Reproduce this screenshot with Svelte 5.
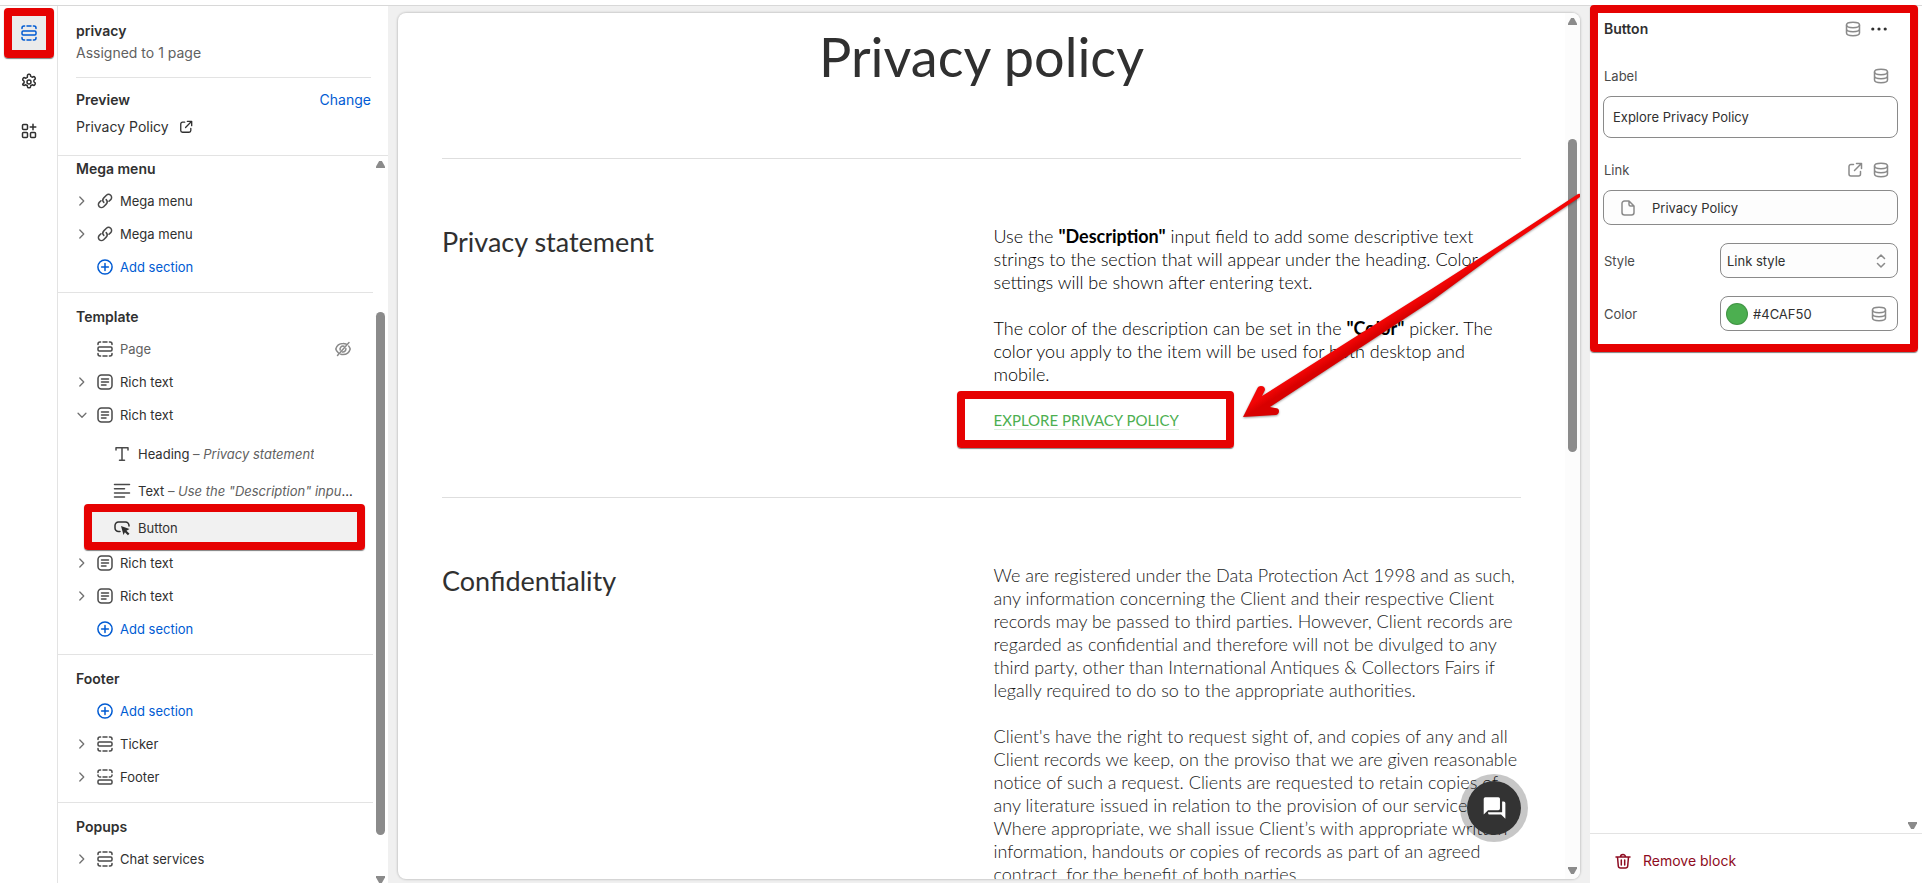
<script lang="ts">
	type Block = { icon: string; label: string; detail?: string; selected?: boolean };
	type Row = { icon: string; label: string; open?: boolean; hidden?: boolean; add?: boolean; blocks?: Block[] };
	type Group = { title: string; rows: Row[] };

	const addRow: Row = { icon: 'plus', label: 'Add section', add: true };

	const groups: Group[] = [
		{
			title: 'Mega menu',
			rows: [{ icon: 'chain', label: 'Mega menu' }, { icon: 'chain', label: 'Mega menu' }, addRow]
		},
		{
			title: 'Template',
			rows: [
				{ icon: 'section', label: 'Page', hidden: true },
				{ icon: 'richtext', label: 'Rich text' },
				{
					icon: 'richtext',
					label: 'Rich text',
					open: true,
					blocks: [
						{ icon: 'heading', label: 'Heading', detail: 'Privacy statement' },
						{ icon: 'text', label: 'Text', detail: 'Use the "Description" input field to add some text' },
						{ icon: 'button', label: 'Button', selected: true }
					]
				},
				{ icon: 'richtext', label: 'Rich text' },
				{ icon: 'richtext', label: 'Rich text' },
				addRow
			]
		},
		{
			title: 'Footer',
			rows: [addRow, { icon: 'section', label: 'Ticker' }, { icon: 'footer', label: 'Footer' }]
		},
		{
			title: 'Popups',
			rows: [{ icon: 'section', label: 'Chat services' }]
		}
	];

	let label = $state('Explore Privacy Policy');
	let style = $state('Link style');
	let color = $state('#4CAF50');
</script>

{#snippet icon(name: string, size = 16)}
	<svg class="icon" width={size} height={size} viewBox="0 0 16 16" aria-hidden="true">
		{#if name === 'section'}
			<rect x="1" y="6" width="14" height="4" rx="1.2" />
			<path d="M1 3.6V3a2 2 0 0 1 2-2h.6M6 1h4M12.4 1h.6a2 2 0 0 1 2 2v.6M1 12.4v.6a2 2 0 0 0 2 2h.6M6 15h4M12.4 15h.6a2 2 0 0 0 2-2v-.6" />
		{:else if name === 'footer'}
			<rect x="1" y="11" width="14" height="4" rx="1.2" />
			<path d="M1 3.6V3a2 2 0 0 1 2-2h.6M6 1h4M12.4 1h.6a2 2 0 0 1 2 2v.6M1 6v.5A1.7 1.7 0 0 0 2.7 8h1M6 8h4M12.3 8h1A1.7 1.7 0 0 0 15 6.500V6" />
		{:else if name === 'gear'}
			<circle cx="8" cy="8" r="2" />
			<path d="M6.500 1.100c.1-.5.5-.9 1-.9h1c.5 0 .9.4 1 .9l.2 1.300c.5.200 1 .5 1.400.8l1.300-.5c.5-.2 1 0 1.300.5l.5.800c.2.400.1 1-.3 1.300l-1 .9v1.600l1 .9c.4.300.5.900.3 1.300l-.5.800c-.3.500-.8.700-1.300.5l-1.300-.5c-.4.300-.9.600-1.400.8l-.2 1.300c-.1.500-.5.900-1 .9h-1c-.5 0-.9-.4-1-.9l-.2-1.300c-.5-.2-1-.5-1.400-.8l-1.300.5c-.5.2-1 0-1.300-.5L1.800 10.900c-.2-.4-.1-1 .3-1.300l1-.8V7.200l-1-.9c-.4-.3-.5-.9-.3-1.300l.5-.8c.3-.5.800-.7 1.300-.5l1.300.5c.4-.3.900-.6 1.400-.8z" />
		{:else if name === 'apps'}
			<rect x="1.500" y="1.500" width="5" height="5" rx="1" />
			<rect x="1.500" y="9.500" width="5" height="5" rx="1" />
			<rect x="9.500" y="9.500" width="5" height="5" rx="1" />
			<path d="M12 1.200v5.600M9.200 4h5.600" />
		{:else if name === 'external'}
			<path d="M6.500 2.500H4a2 2 0 0 0-2 2V12a2 2 0 0 0 2 2h7.500a2 2 0 0 0 2-2V9.500M9.500 1.500h5v5M14.200 1.800 7.500 8.500" />
		{:else if name === 'chain'}
			<path d="M6.800 9.400a3.200 3.200 0 0 1 0-4.500l2.600-2.600a3 3 0 0 1 4.300 4.300L12 8.300M9.200 6.600a3.200 3.200 0 0 1 0 4.500l-2.600 2.600a3 3 0 0 1-4.300-4.300L4 7.700" />
		{:else if name === 'plus'}
			<circle cx="8" cy="8" r="7.100" />
			<path d="M8 4.600v6.800M4.600 8h6.800" />
		{:else if name === 'richtext'}
			<rect x="1" y="1" width="14" height="14" rx="3.500" />
			<path d="M4.500 5h7M4.500 8h7M4.500 11h4.500" />
		{:else if name === 'heading'}
			<path d="M2 4V1.800h12V4M8 1.800v12.400M5.500 14.200h5" />
		{:else if name === 'text'}
			<path d="M.5 1.500h15M.5 5.700h10M.5 9.900h15M.5 14h10" />
		{:else if name === 'button'}
			<path d="M6 11.500H4.500A3.500 3.500 0 0 1 1 8V5.500A3.500 3.500 0 0 1 4.500 2h7A3.500 3.500 0 0 1 15 5.500V6" />
			<path class="solid" d="m7 6 8.500 3-3 1.700 3 3-1.600 1.600-3-3L9.500 15z" />
		{:else if name === 'hidden'}
			<path d="M11 3A8 8 0 0 0 8 2.500C4 2.500 1.600 5 .8 8c.4 1.500 1.200 2.700 2.400 3.700M5.800 13.200c.7.200 1.400.3 2.200.3 4 0 6.400-2.500 7.200-5.500-.3-1.100-.8-2-1.500-2.900M14 1.500 2.500 14.500" />
			<path d="M9 5.200a3 3 0 0 0-3.800 3.900M10.900 7.500a3 3 0 0 1-3.600 3.400" />
		{:else if name === 'data'}
			<ellipse cx="8" cy="4" rx="6.500" ry="2.700" />
			<path d="M1.500 4v8c0 1.500 2.900 2.700 6.500 2.700s6.500-1.200 6.500-2.700V4M1.500 8c0 1.500 2.900 2.700 6.500 2.700s6.500-1.200 6.500-2.700" />
		{:else if name === 'page'}
			<path d="M9 1H4.500a2.500 2.500 0 0 0-2.500 2.500v9A2.500 2.500 0 0 0 4.500 15h7a2.500 2.500 0 0 0 2.500-2.500V6zM9 1v3.500A1.500 1.500 0 0 0 10.500 6H14" />
		{:else if name === 'dots'}
			<circle class="dot" cx="1.800" cy="8" r="1.600" />
			<circle class="dot" cx="8" cy="8" r="1.600" />
			<circle class="dot" cx="14.200" cy="8" r="1.600" />
		{:else if name === 'trash'}
			<path d="M1 4h14M5.500 4a2.500 2.500 0 0 1 5 0M2.500 4l.8 9a2.200 2.200 0 0 0 2.200 2h5a2.200 2.200 0 0 0 2.200-2l.8-9M6.300 7v5M9.700 7v5" />
		{:else if name === 'right'}
			<path d="m5.500 3.500 4.500 4.500-4.500 4.500" />
		{:else if name === 'down'}
			<path d="m3.500 6 4.500 4.500L12.500 6" />
		{:else if name === 'updown'}
			<path d="M4.500 5.500 8 2l3.500 3.500M4.500 10.500 8 14l3.500-3.500" />
		{/if}
	</svg>
{/snippet}

{#snippet scrollbar(before: number, size: number, after: number)}
	<div class="scrollbar" aria-hidden="true">
		<i class="up"></i>
		<div class="track">
			<span style="flex-grow: {before}"></span>
			<span class="thumb" style="flex-grow: {size}"></span>
			<span style="flex-grow: {after}"></span>
		</div>
		<i class="down"></i>
	</div>
{/snippet}

<div class="editor">
	<div class="topbar"></div>
	<div class="columns">
		<nav class="rail">
			<button type="button" class="active marked" aria-label="Sections">{@render icon('section')}</button>
			<button type="button" aria-label="Theme settings">{@render icon('gear')}</button>
			<button type="button" aria-label="App embeds">{@render icon('apps')}</button>
		</nav>

		<aside class="sidebar">
			<header>
				<div class="template">
					<h2>privacy</h2>
					<p>Assigned to 1 page</p>
				</div>
				<div class="preview-row">
					<h2>Preview</h2>
					<button type="button" class="change">Change</button>
				</div>
				<a class="page-link" href="#preview">Privacy Policy {@render icon('external', 14)}</a>
			</header>
			<div class="scroller">
				<div class="tree">
					{#each groups as group}
						<section>
							<h3>{group.title}</h3>
							{#each group.rows as row}
								<div class="row" class:add={row.add} class:muted={row.hidden}>
									<span class="caret">
										{#if !row.add && !row.hidden}
											<button type="button" aria-label="Toggle {row.label}">
												{@render icon(row.open ? 'down' : 'right', 14)}
											</button>
										{/if}
									</span>
									<button type="button" class="name">{@render icon(row.icon)}{row.label}</button>
									{#if row.hidden}
										<button type="button" class="eye" aria-label="Show {row.label}">{@render icon('hidden')}</button>
									{/if}
								</div>
								{#if row.blocks}
									<div class="blocks">
										{#each row.blocks as block}
											<button type="button" class="block" class:selected={block.selected} class:marked={block.selected}>
												{@render icon(block.icon)}
												<span>{block.label}{#if block.detail}<em>&nbsp;– <i>{block.detail}</i></em>{/if}</span>
											</button>
										{/each}
									</div>
								{/if}
							{/each}
						</section>
					{/each}
				</div>
				{@render scrollbar(140, 524, 37)}
			</div>
		</aside>

		<main>
			<div class="preview" id="preview">
				<div class="page">
					<h1>Privacy policy</h1>
					<article>
						<h2>Privacy statement</h2>
						<div class="copy dark">
							<p>
								Use the <strong>"Description"</strong> input field to add some descriptive text strings to the
								section that will appear under the heading. Color settings will be shown after entering text.
							</p>
							<p>
								The color of the description can be set in the <strong>"Color"</strong> picker. The color you
								apply to the item will be used for both desktop and mobile.
							</p>
							<div class="cta marked">
								<a href="#policy" style="color: {color}">{label}</a>
							</div>
						</div>
					</article>
					<article>
						<h2>Confidentiality</h2>
						<div class="copy">
							<p>
								We are registered under the Data Protection Act 1998 and as such, any information concerning the
								Client and their respective Client records may be passed to third parties. However, Client records
								are regarded as confidential and therefore will not be divulged to any third party, other than
								International Antiques &amp; Collectors Fairs if legally required to do so to the appropriate
								authorities.
							</p>
							<p>
								Client's have the right to request sight of, and copies of any and all Client records we keep, on
								the proviso that we are given reasonable notice of such a request. Clients are requested to retain
								copies of any literature issued in relation to the provision of our services. Where appropriate, we
								shall issue Client’s with appropriate written information, handouts or copies of records as part of
								an agreed contract, for the benefit of both parties.
							</p>
						</div>
					</article>
				</div>
				{@render scrollbar(109, 310, 408)}

				<svg class="arrow" width="340" height="230" viewBox="0 0 340 230" aria-hidden="true">
					<defs>
						<linearGradient id="shaft" gradientUnits="userSpaceOnUse" x1="120" y1="136" x2="130" y2="152">
							<stop offset="0.300" stop-color="#f20505" />
							<stop offset="0.700" stop-color="#d80000" />
						</linearGradient>
					</defs>
					<path
						d="M338 1 257 54 193 95 123 139 22 203 25 197Q25 193 21 193 18 193 17 196L3 224 36 222Q39 221 39 218 39 215 35 215L30 214 123 153 193 107 257 60 340 4Q342 0 338 1Z"
						fill="url(#shaft)"
					/>
				</svg>

				<button type="button" class="chat" aria-label="Open chat">
					<svg width="26" height="26" viewBox="0 0 24 24" aria-hidden="true">
						<path d="M4 2h12a1.500 1.500 0 0 1 1.500 1.500v9A1.500 1.500 0 0 1 16 14H6.500l-4 4V3.500A1.500 1.500 0 0 1 4 2zm15.500 4H21a1.500 1.500 0 0 1 1.500 1.500V22l-4-4H8a1.500 1.500 0 0 1-1.500-1.500V16h13z" />
					</svg>
				</button>
			</div>
		</main>

		<aside class="settings">
			<form class="marked" onsubmit={(e) => e.preventDefault()}>
				<div class="line title">
					<h2>Button</h2>
					<button type="button" aria-label="Connect dynamic source">{@render icon('data')}</button>
					<button type="button" class="more" aria-label="More actions">{@render icon('dots')}</button>
				</div>
				<div class="line">
					<label for="label">Label</label>
					<button type="button" aria-label="Connect label">{@render icon('data')}</button>
				</div>
				<input id="label" class="field tall" type="text" bind:value={label} />
				<div class="line spaced">
					<label for="link">Link</label>
					<button type="button" aria-label="Open link">{@render icon('external')}</button>
					<button type="button" aria-label="Connect link">{@render icon('data')}</button>
				</div>
				<button type="button" id="link" class="field picker">{@render icon('page')}Privacy Policy</button>
				<div class="pair">
					<label for="style">Style</label>
					<div class="field tinted">
						<select id="style" bind:value={style}>
							<option>Link style</option>
							<option>Button style</option>
						</select>
						{@render icon('updown')}
					</div>
				</div>
				<div class="pair">
					<label for="color">Color</label>
					<div class="field">
						<button type="button" class="swatch" style="background: {color}" aria-label="Pick color"></button>
						<input id="color" type="text" bind:value={color} />
						<button type="button" class="source" aria-label="Connect color">{@render icon('data')}</button>
					</div>
				</div>
			</form>
			<i class="down"></i>
			<footer>
				<button type="button">{@render icon('trash')}Remove block</button>
			</footer>
		</aside>
	</div>
</div>

<style>
	:global(body) {
		margin: 0;
	}
	.editor {
		--ink: #303030;
		--subdued: #616161;
		--line: #e3e3e3;
		--blue: #005bd3;
		--mark: #e60202;
		height: 100vh;
		display: flex;
		flex-direction: column;
		overflow: hidden;
		background: #fff;
		color: var(--ink);
		font: 400 13px/20px Inter, sans-serif;
	}
	.editor * {
		box-sizing: border-box;
	}
	h1,
	h2,
	h3,
	p {
		margin: 0;
	}
	button {
		display: block;
		padding: 0;
		border: 0;
		background: none;
		color: inherit;
		font: inherit;
		text-align: left;
		cursor: pointer;
	}
	.icon {
		display: block;
		flex: none;
		fill: none;
		stroke: currentColor;
		stroke-width: 1.5;
		stroke-linejoin: round;
		stroke-linecap: round;
		overflow: visible;
	}
	.solid,
	.dot {
		fill: currentColor;
		stroke: none;
	}
	.topbar {
		flex: none;
		height: 6px;
		border-bottom: 1px solid #d8d8d8;
	}
	.columns {
		flex: 1;
		display: flex;
		min-height: 0;
	}

	/* red highlight frames lie over the element they point at */
	.marked {
		position: relative;
	}
	.marked::after {
		content: '';
		position: absolute;
		inset: 0;
		z-index: 2;
		border: 8px solid var(--mark);
		border-radius: 4px;
		box-shadow: 0 1px 1px rgba(0, 0, 0, 0.5);
		pointer-events: none;
	}

	.rail {
		flex: none;
		width: 58px;
		padding-top: 10px;
		display: flex;
		flex-direction: column;
		align-items: center;
		gap: 15px;
		border-right: 1px solid var(--line);
	}
	.rail button {
		width: 34px;
		height: 34px;
		display: grid;
		place-items: center;
	}
	.rail .active {
		background: #ebebeb;
		color: var(--blue);
	}
	.rail .active::after {
		inset: -8px;
	}

	.sidebar {
		flex: none;
		width: 330px;
		display: flex;
		flex-direction: column;
	}
	.sidebar header {
		padding: 15px 17px 18px 18px;
		border-bottom: 1px solid var(--line);
		font-size: 14px;
	}
	h2,
	h3 {
		font-size: 14px;
		font-weight: 600;
		line-height: 20px;
	}
	.template {
		padding-bottom: 14px;
		border-bottom: 1px solid var(--line);
		margin-bottom: 12px;
	}
	.template p {
		margin-top: 2px;
		color: var(--subdued);
	}
	.preview-row {
		display: flex;
		justify-content: space-between;
		margin-bottom: 7px;
	}
	.change {
		color: var(--blue);
	}
	.page-link {
		display: flex;
		align-items: center;
		gap: 10px;
		color: inherit;
		text-decoration: none;
	}
	.scroller {
		flex: 1;
		display: flex;
		min-height: 0;
	}
	.tree {
		flex: 1;
		min-width: 0;
		overflow: hidden;
	}
	.tree section {
		padding-bottom: 9px;
	}
	.tree section + section {
		border-top: 1px solid var(--line);
	}
	.tree h3 {
		padding: 14px 18px 5px;
	}
	.tree section:first-child h3 {
		padding-top: 3px;
	}
	.row {
		height: 33px;
		display: flex;
		align-items: center;
		padding: 0 22px 0 17px;
	}
	.caret {
		width: 22px;
		color: #707070;
	}
	.name {
		flex: 1;
		display: flex;
		align-items: center;
		gap: 7px;
	}
	.name .icon,
	.block .icon {
		color: #4a4a4a;
	}
	.add,
	.add .name .icon {
		color: var(--blue);
	}
	.muted {
		color: var(--subdued);
	}
	.eye {
		color: #8a8a8a;
	}
	.blocks {
		margin: 4px 8px 0 26px;
		display: flex;
		flex-direction: column;
	}
	.block {
		height: 37px;
		display: flex;
		align-items: center;
		gap: 8px;
		padding: 0 10px 0 30px;
	}
	.block span {
		overflow: hidden;
		white-space: nowrap;
		text-overflow: ellipsis;
	}
	.block em {
		font-style: normal;
		color: var(--subdued);
	}
	.block i {
		font-style: italic;
	}
	.block.selected {
		background: #f1f1f1;
	}
	.block.selected .icon {
		color: var(--ink);
	}
	.block.selected::after {
		inset: -5px 0 -4px;
	}

	.scrollbar {
		flex: none;
		width: 15px;
		padding: 5px 3px;
		display: flex;
		flex-direction: column;
		gap: 4px;
	}
	.track {
		flex: 1;
		display: flex;
		flex-direction: column;
	}
	.thumb {
		border-radius: 5px;
		background: #8b8b8b;
	}
	.up,
	.down {
		width: 9px;
		height: 7px;
		background: #8b8b8b;
	}
	.up {
		clip-path: polygon(35% 0, 65% 0, 100% 80%, 100% 100%, 0 100%, 0 80%);
	}
	.down {
		clip-path: polygon(0 0, 100% 0, 100% 20%, 65% 100%, 35% 100%, 0 20%);
	}
	.sidebar .scrollbar {
		padding-bottom: 0;
	}

	main {
		flex: 1;
		min-width: 0;
		display: flex;
		padding: 7px 10px 4px;
		background: #f0f0f0;
	}
	.preview {
		position: relative;
		flex: 1;
		display: flex;
		min-width: 0;
		overflow: hidden;
		border-radius: 8px;
		background: #fff;
		box-shadow: 0 0 2px 1px rgba(0, 0, 0, 0.15);
	}
	.preview .scrollbar {
		background: #fcfcfc;
	}
	.page {
		flex: 1;
		min-width: 0;
		padding: 0 44px;
		overflow: hidden;
		font-family: Lato, sans-serif;
	}
	h1 {
		padding: 12px 0 69px;
		font-size: 54px;
		font-weight: 400;
		line-height: 64px;
		text-align: center;
	}
	article {
		display: grid;
		grid-template-columns: 1fr 1fr;
		gap: 24px;
		padding: 66px 0 65px;
		border-top: 1px solid #dedede;
	}
	article h2 {
		font-size: 27px;
		font-weight: 400;
		line-height: 34px;
	}
	.copy {
		color: #1a1a1a;
		font-size: 18px;
		font-weight: 300;
		line-height: 23px;
	}
	.copy p + p {
		margin-top: 23px;
	}
	.copy.dark {
		color: #000;
	}
	.copy strong {
		font-weight: 700;
	}
	.cta {
		width: 206px;
		margin-top: 21px;
		line-height: 24px;
	}
	.cta a {
		border-bottom: 1px solid #dcefdc;
		font-size: 15px;
		font-weight: 400;
		text-decoration: none;
		text-transform: uppercase;
	}
	.cta.marked::after {
		inset: -16px -34px -16px -37px;
	}
	.arrow {
		position: absolute;
		top: 180px;
		right: 0;
		z-index: 3;
		filter: drop-shadow(0 1px 1px rgba(0, 0, 0, 0.4));
		pointer-events: none;
	}
	.chat {
		position: absolute;
		right: 52px;
		bottom: 37px;
		width: 68px;
		height: 68px;
		display: grid;
		place-items: center;
		border: 7px solid rgba(0, 0, 0, 0.22);
		border-radius: 50%;
		background: #333;
		background-clip: padding-box;
	}
	.chat svg {
		fill: #fff;
	}

	.settings {
		flex: none;
		width: 332px;
		display: flex;
		flex-direction: column;
	}
	form {
		padding: 13px 24px 21px 13px;
	}
	form.marked::after {
		inset: -1px 4px 0 0;
	}
	.line {
		display: flex;
		align-items: center;
		gap: 10px;
		padding: 0 9px 0 1px;
		height: 20px;
		margin-bottom: 10px;
		color: #8a8a8a;
	}
	.line h2,
	.line label {
		flex: 1;
	}
	.line h2,
	.more {
		color: var(--ink);
	}
	.line label,
	.pair label {
		color: #4a4a4a;
	}
	.title {
		padding-right: 11px;
		margin-bottom: 27px;
	}
	.spaced {
		margin-top: 22px;
	}
	.field {
		width: 100%;
		height: 35px;
		display: flex;
		align-items: center;
		border: 1px solid #8a8a8a;
		border-radius: 8px;
		background: #fff;
		color: var(--ink);
		font: inherit;
	}
	.tall {
		height: 42px;
		padding: 0 9px;
	}
	.picker {
		gap: 16px;
		padding: 0 16px;
		background: #fdfdfd;
	}
	.field .icon {
		color: #8a8a8a;
	}
	.pair {
		display: flex;
		align-items: center;
		justify-content: space-between;
		padding-left: 1px;
		margin-top: 18px;
	}
	.pair .field {
		width: 178px;
		padding: 0 8px 0 5px;
		gap: 5px;
	}
	.pair .source {
		margin-right: 2px;
	}
	.tinted,
	select {
		background: #fdfdfd;
	}
	select,
	.pair input {
		flex: 1;
		min-width: 0;
		padding: 0;
		border: 0;
		appearance: none;
		color: inherit;
		font: inherit;
	}
	select {
		padding-left: 1px;
	}
	.swatch {
		width: 22px;
		height: 22px;
		border: 1px solid rgba(0, 0, 0, 0.15);
		border-radius: 50%;
	}
	.settings > .down {
		margin: auto 5px 4px auto;
	}
	.settings footer {
		padding: 17px 25px 12px;
		border-top: 1px solid var(--line);
	}
	.settings footer button {
		display: flex;
		align-items: center;
		gap: 12px;
		color: #8e0b21;
		font-size: 14px;
	}
</style>
